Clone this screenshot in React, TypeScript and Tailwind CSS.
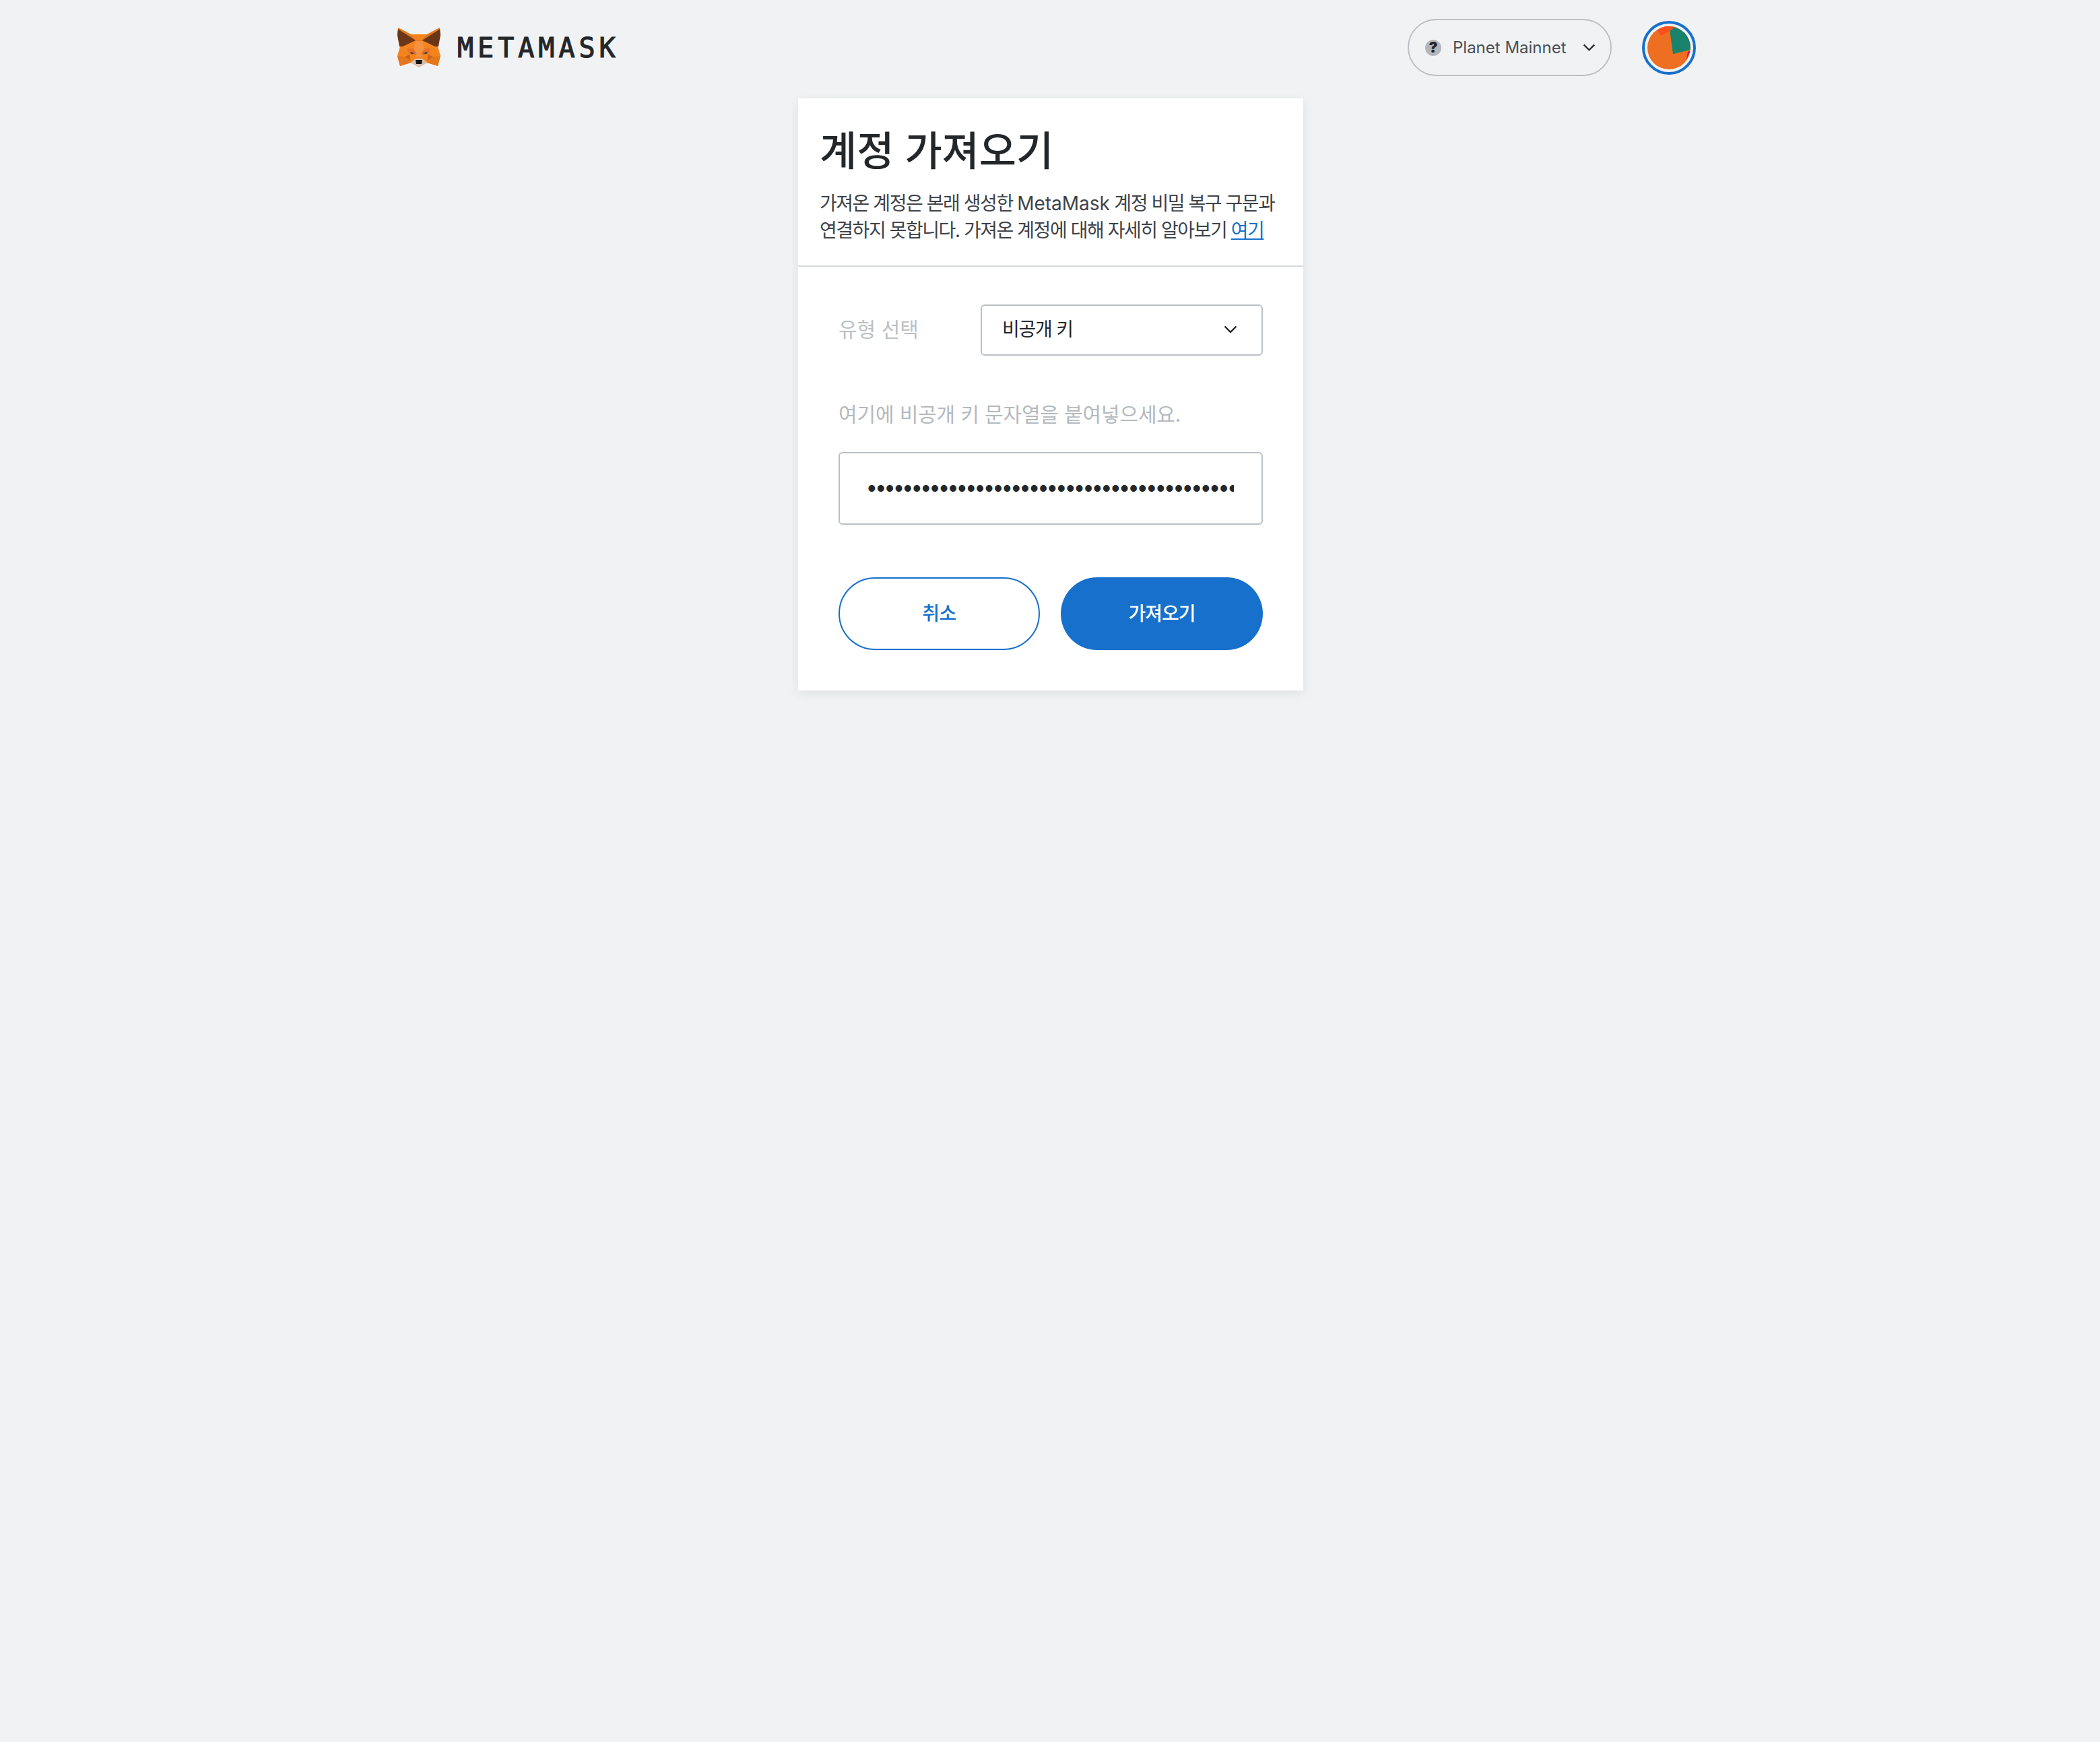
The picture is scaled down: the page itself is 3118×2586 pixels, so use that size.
const kr = "font-['Inter','Noto_Sans_CJK_KR',sans-serif]";

const Fox = () => (
  <svg viewBox="0 0 64 59" className="w-16 h-[59px] shrink-0">
    {/* base head */}
    <polygon points="1,0 20,10 44,10 63,0 64,11 60,28 64,42 60,57 44,52 32,59 20,52 4,57 0,42 4,28 0,11" fill="#f5841f" />
    <polygon points="1,0 20,10 28,19 36,19 44,10 63,0 37,20 27,20" fill="#e2761b" />
    {/* ears */}
    <polygon points="1,2 27,19 8,28 3,28 0,11" fill="#6b3618" />
    <polygon points="63,2 37,19 56,28 61,28 64,11" fill="#6b3618" />
    {/* brow, centre */}
    <polygon points="27,20 37,20 40,32 36,44 28,44 24,32" fill="#f6913f" />
    <polygon points="14,31 24,31 29,40 18,40" fill="#e2712a" />
    <polygon points="50,31 40,31 35,40 46,40" fill="#e2712a" />
    {/* cheeks */}
    <polygon points="0,42 11,43 20,52 4,57" fill="#e4761b" />
    <polygon points="64,42 53,43 44,52 60,57" fill="#e4761b" />
    <polygon points="11,43 18,40 20,50" fill="#cd6116" />
    <polygon points="53,43 46,40 44,50" fill="#cd6116" />
    {/* eyes */}
    <polygon points="19,36 26,38 21,39" fill="#233447" />
    <polygon points="45,36 38,38 43,39" fill="#233447" />
    {/* muzzle */}
    <polygon points="20,52 27,46 37,46 44,52 32,59" fill="#d7c1b3" />
    <polygon points="27,48 37,48 36,54 28,54" fill="#161616" />
  </svg>
);

const Avatar = () => (
  <div className="w-20 h-20 rounded-full border-4 border-[#1670cc] flex items-center justify-center shrink-0">
    <svg viewBox="0 0 64 64" className="w-16 h-16">
      <clipPath id="avatar-clip">
        <circle cx="32" cy="32" r="32" />
      </clipPath>
      <g clipPath="url(#avatar-clip)">
        <rect width="64" height="64" fill="#ee6e22" />
        <polygon points="13,3 20,14 33.3,6.7 44,0 13,0" fill="#f9501d" />
        <polygon points="63.5,37 58,50 60,37.5" fill="#c2185b" />
        <polygon points="33.3,6.7 42.3,0 64,0 64,34.7 38,41.3" fill="#18826b" />
      </g>
    </svg>
  </div>
);

const Chevron = ({ className }: { className: string }) => (
  <svg viewBox="0 0 20 12" fill="none" className={className}>
    <path d="M1.5 1.5 L10 10 L18.5 1.5" stroke="#24272a" strokeWidth="2.4" />
  </svg>
);

export default function App() {
  return (
    <div className={`min-h-[2586px] bg-[#f1f2f4] flex flex-col items-center ${kr}`}>
      <header className="w-[1928px] mr-[10px] h-[146px] pb-[5px] flex items-center">
        <Fox />
        <span className="ml-[25px] font-['DejaVu_Sans_Mono',monospace] [-webkit-text-stroke:1.2px_#24272a] text-[40px] leading-none tracking-[6px] text-[#24272a]">
          METAMASK
        </span>
        <div className="ml-auto w-[303px] h-[85px] rounded-full border-2 border-[#bbc0c5] flex items-center pl-[24px] pr-[22px]">
          <span className="w-6 h-6 rounded-full bg-[#b3b7bb] flex items-center justify-center text-[22px] font-black text-[#24272a]">
            ?
          </span>
          <span className="ml-[17px] text-[24px] text-[#4a4f55]">Planet Mainnet</span>
          <Chevron className="ml-auto w-[19px] h-[11px]" />
        </div>
        <div className="ml-[45px]">
          <Avatar />
        </div>
      </header>

      <main className="w-[750px] ml-[2px] h-[879px] bg-white shadow-[0_4px_16px_rgba(0,0,0,0.08)] flex flex-col">
        <div className="h-[250px] px-[32px] pt-[42px] border-b-2 border-[#d6d9dc]">
          <h1 className="text-[60px] leading-[72px] font-medium text-[#24272a]">계정 가져오기</h1>
          <p className="mt-[22px] text-[28px] leading-[40px] tracking-[-1.45px] text-[#3e4349] whitespace-nowrap">
            가져온 계정은 본래 생성한 <span className="tracking-[0px]">MetaMask</span> 계정 비밀 복구 구문과
            <br />
            연결하지 못합니다. 가져온 계정에 대해 자세히 알아보기{" "}
            <a className="text-[#1670cc] underline">여기</a>
          </p>
        </div>
        <div className="flex-1 px-[60px] pt-[56px]">
          <div className="flex items-center">
            <span className="w-[211px] pb-[2px] text-[30px] text-[#bbc0c5]">유형 선택</span>
            <div className="flex-1 h-[76px] rounded-[6px] border-2 border-[#bbc0c5] flex items-center pl-[30px] pr-[36px] pb-[2px]">
              <span className="text-[28px] tracking-[-1.2px] text-[#24272a]">비공개 키</span>
              <Chevron className="ml-auto w-[20px] h-[12px]" />
            </div>
          </div>
          <p className="mt-[67px] text-[30px] leading-[40px] tracking-[-0.15px] text-[#b4b9be]">
            여기에 비공개 키 문자열을 붙여넣으세요.
          </p>
          <input
            type="password"
            readOnly
            value="5f2a9c1e7b3d8046af21c9e5d7b3184f6a0c2e9d7b51f3a8"
            className="block w-full mt-[36px] h-[108px] rounded-[6px] border-2 border-[#bbc0c5] px-[41px] font-['Liberation_Sans',sans-serif] text-[36px] tracking-[0.8px] text-[#24272a] outline-none"
          />
          <div className="mt-[78px] flex gap-[31px]">
            <button className="w-[299px] h-[108px] rounded-[54px] border-2 border-[#1670cc] text-[#1670cc] text-[28px] tracking-[-0.5px] font-medium">
              취소
            </button>
            <button className="flex-1 h-[108px] rounded-[54px] bg-[#1670cc] text-white text-[28px] tracking-[-1px] font-medium">
              가져오기
            </button>
          </div>
        </div>
      </main>
    </div>
  );
}
